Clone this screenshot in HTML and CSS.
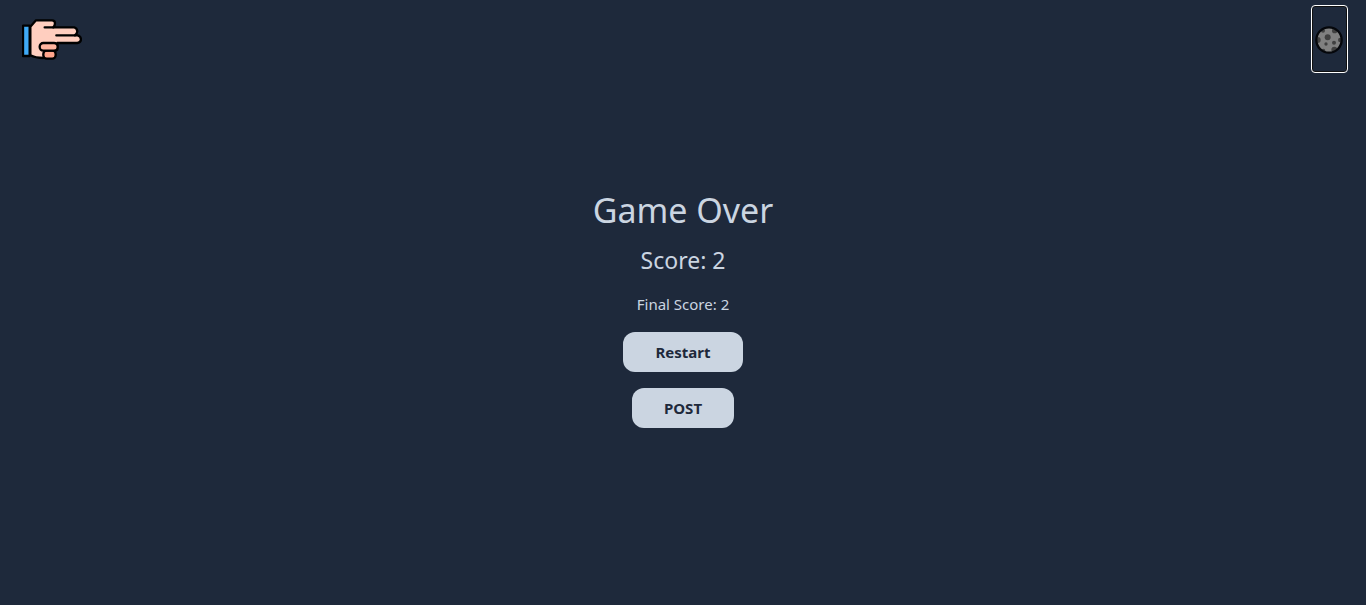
FILE: index.html
```html
<!DOCTYPE html>
<html lang="en">
<head>
<meta charset="utf-8">
<meta name="viewport" content="width=device-width, initial-scale=1">
<title>Game Over</title>
<link rel="stylesheet" href="styles.css">
</head>
<body>
<header class="topbar">
  <svg class="hand" viewBox="18 26 180 123" role="img" aria-label="Pointing hand">
    <g stroke="#000" stroke-width="7" stroke-linejoin="round" stroke-linecap="round">
      <rect x="21" y="46" width="20" height="91" fill="#3fa9f5"/>
      <path d="M43 49L60 30H108Q117 30 117 38Q117 46 112 51H175Q183 53 184 63Q183 71 177 75H185Q194 77 195 87Q194 97 184 98H124V118L82 143Q58 143 43 135Z" fill="#ffcebf"/>
      <path d="M86 51H112M121 75H177" fill="none"/>
      <rect x="82" y="121" width="37" height="24" rx="10" fill="#ffa58c"/>
      <rect x="71" y="98" width="54" height="23" rx="11" fill="#ffb5a0"/>
    </g>
  </svg>
  <button class="theme" type="button" aria-label="Toggle theme">
    <svg class="moon" viewBox="0 0 84 84" aria-hidden="true">
      <clipPath id="disc"><circle cx="42" cy="42" r="36"/></clipPath>
      <circle cx="42" cy="42" r="38" fill="#808080"/>
      <g fill="#404040" clip-path="url(#disc)">
        <circle cx="38" cy="34" r="9"/>
        <circle cx="33" cy="54" r="5"/>
        <circle cx="57" cy="50" r="6"/>
        <circle cx="8" cy="42" r="9"/>
        <circle cx="24" cy="14" r="6"/>
        <circle cx="59" cy="14" r="8"/>
        <circle cx="76" cy="42" r="7"/>
        <circle cx="58" cy="71" r="9"/>
        <circle cx="25" cy="74" r="6"/>
      </g>
      <circle cx="42" cy="42" r="38" fill="none" stroke="#05070b" stroke-width="7"/>
    </svg>
  </button>
</header>
<main class="result">
  <h1 class="title">Game Over</h1>
  <p class="score">Score: 2</p>
  <p class="final">Final Score: 2</p>
  <button class="action" type="button">Restart</button>
  <button class="action" type="button">POST</button>
</main>
</body>
</html>
```
FILE: styles.css
```css
* {
  box-sizing: border-box;
}

body {
  margin: 0;
  min-height: 100vh;
  background: #1e293b;
  color: #cbd5e1;
  font-family: "Segoe UI", "Noto Sans", sans-serif;
  font-size: 15px;
  line-height: 24px;
}

.topbar {
  display: flex;
  justify-content: space-between;
  align-items: center;
  padding: 5px 18px 0 22px;
}

.hand {
  width: 60px;
  height: 41px;
}

.theme {
  display: flex;
  align-items: center;
  padding: 20px 4px 18px 3px;
  border: 1px solid #fff;
  border-radius: 4px;
  background: transparent;
  box-shadow: inset 0 0 0 1px #101010;
}

.moon {
  width: 28px;
  height: 28px;
}

.result {
  display: flex;
  flex-direction: column;
  align-items: center;
  gap: 16px;
  padding-top: 119px;
}

.title,
.score,
.final {
  margin: 0;
  font-weight: 400;
}

.title {
  font-size: 34px;
  line-height: 36px;
}

.score {
  font-size: 23px;
  line-height: 32px;
}

.action {
  padding: 8px 32px;
  border: 0;
  border-radius: 12px;
  background: #cbd5e1;
  color: #1e293b;
  font: inherit;
  font-weight: 700;
}
```
